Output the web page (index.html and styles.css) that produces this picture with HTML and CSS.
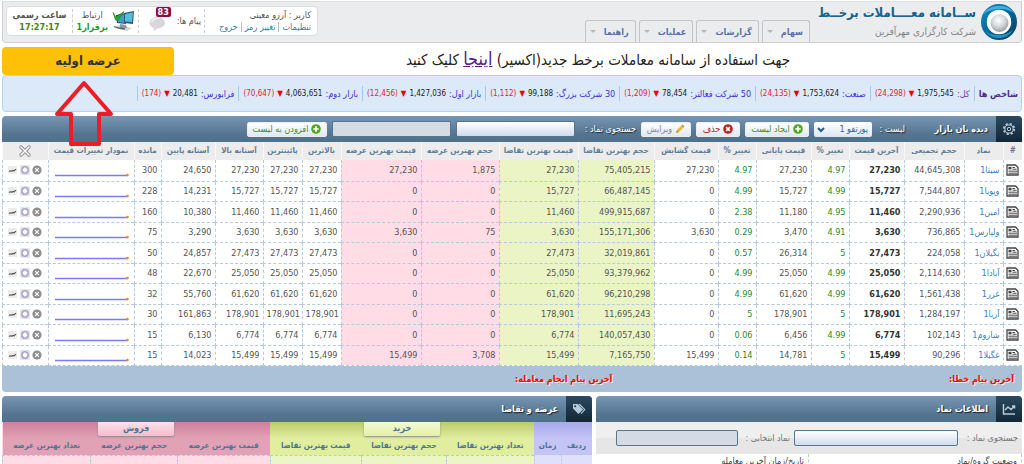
FILE: index.html
```html
<!DOCTYPE html>
<html lang="fa" dir="rtl">
<head>
<meta charset="utf-8">
<title>سامانه معاملات برخط</title>
<link rel="stylesheet" href="styles.css">
</head>
<body>
<svg class="defs" aria-hidden="true">
  <defs>
    <linearGradient id="ringFill" x1="0" y1="0" x2="1" y2="1"><stop offset="0" stop-color="#1187bd"/><stop offset=".5" stop-color="#04669a"/><stop offset="1" stop-color="#0b3f63"/></linearGradient>
    <radialGradient id="ballFill" cx=".45" cy=".35" r=".7"><stop offset="0" stop-color="#fff"/><stop offset=".5" stop-color="#d5d8db"/><stop offset="1" stop-color="#8d9499"/></radialGradient>
    <symbol id="doc" viewBox="0 0 13 12"><path d="M1 1h8.500l2.500 2.500V11H1z" fill="#fff" stroke="#444" stroke-width="1.300"/><rect x="2.500" y="2.800" width="3" height="2.600" fill="#444"/><path d="M6.500 3.500h2.500M6.500 5.200h4M2.500 7.200h8.500M2.500 9.200h8.500" stroke="#444"/></symbol>
    <symbol id="del" viewBox="0 0 10 10"><circle cx="5" cy="5" r="4.600" fill="#8e8e8e"/><path d="M3.200 3.200l3.600 3.600M6.800 3.200L3.200 6.800" stroke="#fff" stroke-width="1.100"/></symbol>
    <symbol id="add" viewBox="0 0 10 10"><rect width="10" height="10" rx="1" fill="#e4e3e8"/><circle cx="5" cy="5" r="3.900" fill="#a9a6cc"/><circle cx="5" cy="5" r="2.400" fill="#dddcee"/><path d="M5 2.800v4.400M2.800 5h4.400" stroke="#fff" stroke-width="1.500"/></symbol>
    <symbol id="mini" viewBox="0 0 10 10"><rect y="1" width="9" height="8" fill="#ececec"/><path d="M1 6c1 .6 1.600-.8 2.400 0s1.400-1.400 2.200-.4 1.400-1.300 2.600-1.300" fill="none" stroke="#555" stroke-width="1.100"/></symbol>
    <symbol id="spark" viewBox="0 0 76 6"><path d="M2 3.500h73" stroke="#7a7aff" stroke-width="1.500"/><circle cx="74.500" cy="3" r="1.300" fill="#ff8a00"/></symbol>
    <symbol id="plus" viewBox="0 0 10 10"><circle cx="5" cy="5" r="4.800" fill="#56a51d"/><path d="M5 2.300v5.400M2.300 5h5.400" stroke="#fff" stroke-width="1.700"/></symbol>
  </defs>
</svg>

<header class="top">
  <div class="brand">
    <svg class="logo" viewBox="0 0 38 38" aria-hidden="true">
      <circle cx="19" cy="19" r="15" fill="none" stroke="url(#ringFill)" stroke-width="6"/>
      <path d="M3.500 11C9 1 28-1 35 11c-6-6-22-7-31.500 0z" fill="#3db0dc"/>
      <path d="M5 28c5 8 21 11 28-1-7 6-20 7-28 1z" fill="#2490c0"/>
      <circle cx="19" cy="19" r="12.200" fill="#fff"/>
      <circle cx="19.500" cy="20" r="9" fill="url(#ballFill)"/>
    </svg>
    <div class="brand-text">
      <strong class="brand-name">ســامانه معــــاملات برخــط</strong>
      <span class="brand-sub">شرکت کارگزاری مهرآفرین</span>
    </div>
  </div>
  <nav class="tabs">
    <a class="tab" href="#">سهام</a>
    <a class="tab" href="#">گزارشات</a>
    <a class="tab" href="#">عملیات</a>
    <a class="tab" href="#">راهنما</a>
  </nav>
  <div class="status">
    <div class="user">
      <div>کاربر : آرزو معینی</div>
      <div class="user-links"><a href="#">تنظیمات</a><a href="#">تغییر رمز</a><a href="#">خروج</a></div>
    </div>
    <div class="messages">
      <span>پیام ها:</span>
      <span class="bubble">
        <svg viewBox="0 0 24 24" class="bubble-icon" aria-hidden="true"><path d="M9 9c5 0 8 3 8 6 0 4-5 5.500-8 5.500-1 1.500-2.500 2.200-4 2 1-.8 1.200-1.600.5-2.800C3 19 1.500 17.500 1.500 15c0-3.500 3.500-6 7.500-6z" fill="#dcd6da"/><path d="M3.500 14c1-3 5-4 8-3.500" stroke="#f6f3f5" stroke-width="1.500" fill="none"/></svg>
        <span class="badge">83</span>
      </span>
    </div>
    <div class="link-state">
      <svg viewBox="0 0 22 22" class="net-icon" aria-hidden="true">
        <path d="M2 18l5-3 13 3-5 3z" fill="#cfd4d8"/><path d="M8 14l6 1 1 3H8z" fill="#8b98a2"/>
        <path d="M4 5l10-2v11L5 13z" fill="#23506e"/><path d="M5 6l8-2v9l-7-1z" fill="#3ba0c8"/>
        <path d="M12 3l10-2-1 13-9-1z" fill="#2d5c78"/><path d="M13 4l8-1.500L20 12l-7-.5z" fill="#58bddb"/>
        <path d="M1 2.500L4 7l8-5.500L6 10.500 3.500 10z" fill="#2fa32c" stroke="#1a7d1f" stroke-width=".6"/>
        <path d="M2 16.500l5 1.500 6 1" stroke="#566" fill="none" stroke-width="1.300"/>
      </svg>
      <div class="pair"><span>ارتباط</span><strong class="online">برقرار1</strong></div>
    </div>
    <div class="pair clock"><strong>ساعت رسمی</strong><strong class="time">17:27:17</strong></div>
  </div>
</header>

<section class="notice">
  <p class="notice-text">جهت استفاده از سامانه معاملات برخط جدید(اکسیر) <a href="#">اینجا</a> کلیک کنید</p>
  <div class="offer-wrap">
    <button class="offer" type="button">عرضه اولیه</button>
    <svg class="arrow" viewBox="0 0 62 66" aria-hidden="true"><path d="M31 3L58 34H46V64H18V34H4z" fill="none" stroke="#ee1c24" stroke-width="4" stroke-linejoin="round"/></svg>
  </div>
</section>

<section class="indices">
  <strong class="indices-title">شاخص ها</strong>
  <div class="index"><span class="visited">کل:</span><bdi>1,975,545</bdi><i>▼</i><bdi class="down">(24,298)</bdi></div>
  <div class="index"><span>صنعت:</span><bdi>1,753,624</bdi><i>▼</i><bdi class="down">(24,135)</bdi></div>
  <div class="index"><span>50 شرکت فعالتر:</span><bdi>78,454</bdi><i>▼</i><bdi class="down">(1,209)</bdi></div>
  <div class="index"><span>30 شرکت بزرگ:</span><bdi>99,188</bdi><i>▼</i><bdi class="down">(1,112)</bdi></div>
  <div class="index"><span>بازار اول:</span><bdi>1,427,036</bdi><i>▼</i><bdi class="down">(12,456)</bdi></div>
  <div class="index"><span>بازار دوم:</span><bdi>4,063,651</bdi><i>▼</i><bdi class="down">(70,647)</bdi></div>
  <div class="index"><span>فرابورس:</span><bdi>20,481</bdi><i>▼</i><bdi class="down">(174)</bdi></div>
</section>

<section class="panel watch">
  <div class="bar">
    <span class="bar-icon"><svg viewBox="0 0 14 14" aria-hidden="true"><circle cx="7" cy="7" r="5.200" fill="none" stroke="#b5cbdc" stroke-width="1.800" stroke-dasharray="2.200 1.880"/><circle cx="7" cy="7" r="4.100" fill="none" stroke="#b5cbdc" stroke-width="1"/><circle cx="7" cy="7" r="1.700" fill="none" stroke="#b5cbdc" stroke-width="1"/></svg></span>
    <h2 class="bar-title watch-title">دیده بان بازار</h2>
    <label class="bar-label" for="list">لیست :</label>
    <select id="list" class="pick"><option>پورتفو 1</option></select>
    <button class="btn create" type="button"><svg aria-hidden="true"><use href="#plus"/></svg>ایجاد لیست</button>
    <button class="btn remove" type="button"><svg viewBox="0 0 10 10" aria-hidden="true"><circle cx="5" cy="5" r="4.800" fill="#b9271c"/><path d="M3.200 3.200l3.600 3.600M6.800 3.200L3.200 6.800" stroke="#fff" stroke-width="1.700"/></svg>حذف</button>
    <button class="btn edit" type="button"><svg viewBox="0 0 10 10" aria-hidden="true"><path d="M1 9l1-3 5-5 2 2-5 5z" fill="#f2b91d"/><path d="M1 9l1-3 2 2z" fill="#b98a55"/><path d="M7 1l2 2" stroke="#999" stroke-width="1.500"/></svg>ویرایش</button>
    <label class="bar-label find-label" for="find">جستجوی نماد :</label>
    <input id="find" class="field watch-field" type="text">
    <input class="field watch-field off" type="text" aria-label="نماد" disabled>
    <button class="btn append" type="button"><svg aria-hidden="true"><use href="#plus"/></svg>افزودن به لیست</button>
  </div>
  <table class="quotes">
    <colgroup><col class="w19"><col class="w39"><col class="w60"><col class="w55"><col class="w38"><col class="w55"><col class="w38"><col class="w64"><col class="w76"><col class="w79"><col class="w78"><col class="w80"><col class="w39"><col class="w39"><col class="w48"><col class="w54"><col class="w27"><col class="w86"><col class="w46"></colgroup>
    <thead><tr><th>#</th><th>نماد</th><th>حجم تجمیعی</th><th>آخرین قیمت</th><th>تغییر %</th><th>قیمت پایانی</th><th>تغییر %</th><th>قیمت گشایش</th><th>حجم بهترین تقاضا</th><th>قیمت بهترین تقاضا</th><th>حجم بهترین عرضه</th><th>قیمت بهترین عرضه</th><th>بالاترین</th><th>پائینترین</th><th>آستانه بالا</th><th>آستانه پایین</th><th>مانده</th><th>نمودار تغییرات قیمت</th><th><svg class="cross" viewBox="0 0 12 12" aria-hidden="true"><path d="M2 2l8 8M10 2l-8 8" stroke="#888" stroke-width="3.200" stroke-linecap="round"/><path d="M2 2l8 8M10 2l-8 8" stroke="#fff" stroke-width="1.600" stroke-linecap="round"/></svg></th></tr></thead>
    <tbody>
      <tr><td><svg class="doc"><use href="#doc"/></svg></td><td><a href="#">سیتا1</a></td><td>44,645,308</td><td class="last">27,230</td><td class="up">4.97</td><td>27,230</td><td class="up">4.97</td><td>27,230</td><td class="bid">75,405,215</td><td class="bid">27,230</td><td class="ask">1,875</td><td class="ask">27,230</td><td>27,230</td><td>27,230</td><td>27,230</td><td>24,650</td><td>300</td><td><svg class="spark"><use href="#spark"/></svg></td><td><div class="acts"><svg><use href="#del"/></svg><svg><use href="#add"/></svg><svg><use href="#mini"/></svg></div></td></tr>
      <tr><td><svg class="doc"><use href="#doc"/></svg></td><td><a href="#">وپویا1</a></td><td>7,544,807</td><td class="last">15,727</td><td class="up">4.99</td><td>15,727</td><td class="up">4.99</td><td>0</td><td class="bid">66,487,145</td><td class="bid">15,727</td><td class="ask">0</td><td class="ask">0</td><td>15,727</td><td>15,727</td><td>15,727</td><td>14,231</td><td>228</td><td><svg class="spark"><use href="#spark"/></svg></td><td><div class="acts"><svg><use href="#del"/></svg><svg><use href="#add"/></svg><svg><use href="#mini"/></svg></div></td></tr>
      <tr><td><svg class="doc"><use href="#doc"/></svg></td><td><a href="#">امین1</a></td><td>2,290,936</td><td class="last">11,460</td><td class="up">4.95</td><td>11,180</td><td class="up">2.38</td><td>0</td><td class="bid">499,915,687</td><td class="bid">11,460</td><td class="ask">0</td><td class="ask">0</td><td>11,460</td><td>11,460</td><td>11,460</td><td>10,380</td><td>160</td><td><svg class="spark"><use href="#spark"/></svg></td><td><div class="acts"><svg><use href="#del"/></svg><svg><use href="#add"/></svg><svg><use href="#mini"/></svg></div></td></tr>
      <tr><td><svg class="doc"><use href="#doc"/></svg></td><td><a href="#">ولپارس1</a></td><td>736,865</td><td class="last">3,630</td><td class="up">4.91</td><td>3,470</td><td class="up">0.29</td><td>3,630</td><td class="bid">155,171,306</td><td class="bid">3,630</td><td class="ask">75</td><td class="ask">3,630</td><td>3,630</td><td>3,630</td><td>3,630</td><td>3,290</td><td>75</td><td><svg class="spark"><use href="#spark"/></svg></td><td><div class="acts"><svg><use href="#del"/></svg><svg><use href="#add"/></svg><svg><use href="#mini"/></svg></div></td></tr>
      <tr><td><svg class="doc"><use href="#doc"/></svg></td><td><a href="#">بگیلان1</a></td><td>224,058</td><td class="last">27,473</td><td class="up">5</td><td>26,314</td><td class="up">0.57</td><td>0</td><td class="bid">32,019,861</td><td class="bid">27,473</td><td class="ask">0</td><td class="ask">0</td><td>27,473</td><td>27,473</td><td>27,473</td><td>24,857</td><td>50</td><td><svg class="spark"><use href="#spark"/></svg></td><td><div class="acts"><svg><use href="#del"/></svg><svg><use href="#add"/></svg><svg><use href="#mini"/></svg></div></td></tr>
      <tr><td><svg class="doc"><use href="#doc"/></svg></td><td><a href="#">آبادا1</a></td><td>2,114,630</td><td class="last">25,050</td><td class="up">4.99</td><td>25,050</td><td class="up">4.99</td><td>0</td><td class="bid">93,379,962</td><td class="bid">25,050</td><td class="ask">0</td><td class="ask">0</td><td>25,050</td><td>25,050</td><td>25,050</td><td>22,670</td><td>48</td><td><svg class="spark"><use href="#spark"/></svg></td><td><div class="acts"><svg><use href="#del"/></svg><svg><use href="#add"/></svg><svg><use href="#mini"/></svg></div></td></tr>
      <tr><td><svg class="doc"><use href="#doc"/></svg></td><td><a href="#">غزر1</a></td><td>1,561,438</td><td class="last">61,620</td><td class="up">4.99</td><td>61,620</td><td class="up">4.99</td><td>0</td><td class="bid">96,210,298</td><td class="bid">61,620</td><td class="ask">0</td><td class="ask">0</td><td>61,620</td><td>61,620</td><td>61,620</td><td>55,760</td><td>32</td><td><svg class="spark"><use href="#spark"/></svg></td><td><div class="acts"><svg><use href="#del"/></svg><svg><use href="#add"/></svg><svg><use href="#mini"/></svg></div></td></tr>
      <tr><td><svg class="doc"><use href="#doc"/></svg></td><td><a href="#">آریا1</a></td><td>1,284,197</td><td class="last">178,901</td><td class="up">5</td><td>178,901</td><td class="up">5</td><td>0</td><td class="bid">11,695,243</td><td class="bid">178,901</td><td class="ask">0</td><td class="ask">0</td><td>178,901</td><td>178,901</td><td>178,901</td><td>161,863</td><td>30</td><td><svg class="spark"><use href="#spark"/></svg></td><td><div class="acts"><svg><use href="#del"/></svg><svg><use href="#add"/></svg><svg><use href="#mini"/></svg></div></td></tr>
      <tr><td><svg class="doc"><use href="#doc"/></svg></td><td><a href="#">شاروم1</a></td><td>102,143</td><td class="last">6,774</td><td class="up">4.99</td><td>6,456</td><td class="up">0.06</td><td>0</td><td class="bid">140,057,430</td><td class="bid">6,774</td><td class="ask">0</td><td class="ask">0</td><td>6,774</td><td>6,774</td><td>6,774</td><td>6,130</td><td>15</td><td><svg class="spark"><use href="#spark"/></svg></td><td><div class="acts"><svg><use href="#del"/></svg><svg><use href="#add"/></svg><svg><use href="#mini"/></svg></div></td></tr>
      <tr><td><svg class="doc"><use href="#doc"/></svg></td><td><a href="#">غگیلا1</a></td><td>90,296</td><td class="last">15,499</td><td class="up">5</td><td>14,781</td><td class="up">0.14</td><td>15,499</td><td class="bid">7,165,750</td><td class="bid">15,499</td><td class="ask">3,708</td><td class="ask">15,499</td><td>15,499</td><td>15,499</td><td>15,499</td><td>14,023</td><td>15</td><td><svg class="spark"><use href="#spark"/></svg></td><td><div class="acts"><svg><use href="#del"/></svg><svg><use href="#add"/></svg><svg><use href="#mini"/></svg></div></td></tr>
    </tbody>
  </table>
  <div class="alerts"><span>آخرین پیام خطا:</span><span>آخرین پیام انجام معامله:</span></div>
</section>

<div class="lower">
  <section class="panel info">
    <div class="bar">
      <span class="bar-icon"><svg viewBox="0 0 14 14" aria-hidden="true"><path d="M1.500 2v10h11.500M3 8l3-3 3 2.500L12.500 4M10 4h2.500v2.500" fill="none" stroke="#b5cbdc" stroke-width="1.500"/></svg></span>
      <h2 class="bar-title">اطلاعات نماد</h2>
    </div>
    <div class="search">
      <label class="sym-label" for="sym">جستجوی نماد :</label><input id="sym" class="field sym-field" type="text">
      <label class="chosen-label" for="chosen">نماد انتخابی :</label><input id="chosen" class="field chosen-field off" type="text" disabled>
    </div>
    <div class="facts"><span>وضعیت گروه/نماد</span><span>تاریخ/زمان آخرین معامله</span></div>
  </section>
  <section class="panel depth">
    <div class="bar">
      <span class="bar-icon"><svg viewBox="0 0 14 14" aria-hidden="true"><path d="M6 2l2 0 5.500 5.500-4 4.500-.8-.8L12 7.500z" fill="#b5cbdc"/><path d="M1 2h4.500L11 7.500 6.500 12 1 6.500z" fill="#b5cbdc"/><circle cx="3.200" cy="4.200" r="1" fill="#1a3446"/></svg></span>
      <h2 class="bar-title">عرضه و تقاضا</h2>
    </div>
    <div class="sides">
      <table class="side meta"><thead><tr><th class="w31">ردیف</th><th>زمان</th></tr></thead><tbody><tr><td></td><td></td></tr></tbody></table>
      <table class="side buy"><caption>خرید</caption><thead><tr><th>تعداد بهترین تقاضا</th><th>حجم بهترین تقاضا</th><th>قیمت بهترین تقاضا</th></tr></thead><tbody><tr><td></td><td></td><td></td></tr></tbody></table>
      <table class="side sell"><caption>فروش</caption><thead><tr><th>قیمت بهترین عرضه</th><th>حجم بهترین عرضه</th><th>تعداد بهترین عرضه</th></tr></thead><tbody><tr><td></td><td></td><td></td></tr></tbody></table>
    </div>
  </section>
</div>
</body>
</html>
```
FILE: styles.css
```css
* { box-sizing: border-box; }
html, body { height: 100%; }
body {
  margin: 0;
  padding: 0 2px;
  overflow: hidden;
  background: #fff;
  color: #555;
  font: 9px/12px "DejaVu Sans Condensed", "DejaVu Sans", "Noto Sans", sans-serif;
}
a { text-decoration: none; color: #3a7ca5; }
h2, p { margin: 0; }
button, input, select { font: inherit; margin: 0; }
svg { flex: none; }
.defs { position: absolute; width: 0; height: 0; }

.top {
  display: flex;
  align-items: flex-end;
  height: 42px;
  margin-top: 1px;
  background: #ebecee;
  border: 1px solid #cfcfd1;
  border-top-color: #dedee0;
  border-radius: 0 0 4px 4px;
}
.brand { display: flex; align-items: center; align-self: stretch; gap: 4px; padding-right: 3px; }
.logo { width: 38px; height: 38px; }
.brand-text { display: flex; flex-direction: column; gap: 2px; width: 163px; }
.brand-name { color: #17628f; font-size: 13px; line-height: 18px; white-space: nowrap; }
.brand-sub { color: #858585; font-size: 10px; line-height: 16px; }
.tabs { display: flex; gap: 3px; padding-right: 3px; }
.tab {
  display: flex;
  align-items: center;
  gap: 8px;
  height: 22px;
  padding: 0 6px 0 4px;
  border: 1px solid #c4c4c6;
  border-bottom: 0;
  border-radius: 3px 3px 0 0;
  color: #5672b0;
  font-weight: bold;
}
.tab::after { content: ""; border: 3px solid transparent; border-top-color: #b5b5b5; border-bottom: 0; }
.status {
  display: flex;
  align-self: flex-start;
  align-items: center;
  height: 30px;
  margin: 4px auto 0 3px;
  background: #fff;
  border: 1px solid #dcdcde;
  border-radius: 4px;
}
.status > div { display: flex; align-items: center; height: 24px; padding: 0 6px; white-space: nowrap; }
.status > div + div { border-right: 1px dashed #ccc; }
.status > .user { flex-direction: column; align-items: flex-start; width: 112px; }
.user-links { display: flex; align-items: center; }
.user-links a + a { margin-right: 3px; padding-right: 3px; border-right: 1px solid #bbb; line-height: 10px; }
.status > .messages { gap: 5px; width: 66px; padding: 0 3px; }
.bubble { position: relative; width: 24px; height: 26px; }
.bubble-icon { width: 24px; height: 24px; display: block; }
.badge {
  position: absolute;
  top: -1px;
  right: 1px;
  padding: 0 2px;
  background: #8e0a43;
  border-radius: 2px;
  color: #fff;
  font-weight: bold;
  line-height: 10px;
}
.link-state { gap: 4px; width: 66px; }
.net-icon { width: 22px; height: 22px; }
.status > .link-state { flex-direction: row-reverse; justify-content: flex-end; padding: 0 4px; }
.link-state .net-icon { order: 1; }
.pair { display: flex; flex-direction: column; align-items: center; }
.online { color: #1a9a1a; }
.status > .clock { flex-direction: column; width: 66px; }
.time { color: #4d8500; }

.notice { display: flex; align-items: center; height: 32px; }
.notice-text { flex: 1; text-align: center; color: #222; font-size: 15px; line-height: 24px; }
.notice-text a { color: #551a8b; text-decoration: underline; font-size: 18px; }
.offer-wrap { position: relative; display: flex; }
.offer {
  width: 172px;
  height: 28px;
  margin-top: 3px;
  padding: 0;
  background: #ffc107;
  border: 0;
  border-radius: 4px;
  color: #333;
  font-size: 13px;
  font-weight: bold;
}
.arrow { position: absolute; left: 51px; top: 36px; width: 62px; height: 66px; z-index: 2; }

.indices {
  display: flex;
  align-items: center;
  height: 37px;
  margin-bottom: 4px;
  padding: 0 3px;
  background: #dbe9f8;
  border: 1px solid #b0d3f0;
  border-radius: 4px;
  white-space: nowrap;
}
.indices-title { color: #4b2a86; margin-left: 4px; }
.index { display: flex; align-items: center; gap: 3px; height: 15px; padding: 0 4px; border-right: 1px solid #9ecbee; color: #222; }
.index:last-child { border-left: 1px solid #9ecbee; }
.index bdi { font-size: 8px; }
.index span { color: #3b2fd8; }
.index .visited { color: #6a3aa8; }
.index i { color: #e00; font-style: normal; font-size: 8px; }
.index .down { color: #e8202c; }

.bar {
  display: flex;
  align-items: center;
  gap: 5px;
  height: 26px;
  background: linear-gradient(#7896b5, #54758f 70%, #4f7189);
  border-radius: 4px 4px 0 0;
  overflow: hidden;
}
.bar-icon { display: flex; align-items: center; justify-content: center; width: 26px; height: 26px; background: linear-gradient(#2b4a60, #122735); }
.bar-icon svg { width: 14px; height: 14px; }
.bar-title { margin-right: 3px; color: #fff; font-size: 9px; line-height: 12px; text-shadow: 1px 1px 1px #222; white-space: nowrap; }
.watch-title { width: 78px; }
.bar-label { min-width: 28px; color: #fff; text-shadow: 1px 1px 1px #222; white-space: nowrap; }
.find-label { min-width: 56px; }
.pick {
  appearance: none;
  width: 58px;
  height: 15px;
  padding: 0 4px;
  border: 0;
  border-radius: 2px;
  color: #33658a;
  background: url("data:image/svg+xml,%3Csvg xmlns='http://www.w3.org/2000/svg' viewBox='0 0 8 6'%3E%3Cpath d='M1 1l3 3 3-3' fill='none' stroke='%23205a8c' stroke-width='2'/%3E%3C/svg%3E") 3px 5px / 8px 6px no-repeat, linear-gradient(#fff, #dbe6f4);
}
.btn {
  display: flex;
  align-items: center;
  justify-content: center;
  gap: 3px;
  height: 15px;
  padding: 0 4px;
  border: 1px solid #e8eef4;
  border-radius: 2px;
  background: linear-gradient(#fff, #dfe8f3);
  white-space: nowrap;
}
.btn svg { width: 10px; height: 10px; }
.create { width: 64px; color: #4a8a2a; }
.remove { width: 44px; color: #b02a20; }
.edit { width: 50px; color: #888; }
.append { width: 80px; color: #4a8a2a; }
.field { height: 16px; padding: 0 4px; border: 1px solid #56768f; border-radius: 2px; background: linear-gradient(#fff, #cfdced); }
.watch-field { width: 119px; }
.field.off { background: #d5dbe2; }

.quotes { width: 100%; table-layout: fixed; border-collapse: collapse; }
.quotes th { height: 18px; padding: 0; background: #ececec; color: #5b7d98; border-left: 1px solid #f8f8f8; font-size: 8px; white-space: nowrap; text-align: center; }
.quotes td { height: 21px; padding: 0 3px; border-left: 1px dashed #b4cbdd; border-bottom: 1px dashed #b4cbdd; text-align: right; direction: ltr; white-space: nowrap; }
.quotes tr:nth-child(even) td { height: 20px; }
.quotes td:nth-child(2) { direction: rtl; }
.quotes td:first-child, .quotes td:last-child { padding: 0; text-align: center; }
.quotes a { color: #3e7fc1; }
.quotes .last { color: #333; font-weight: bold; }
.quotes .up { color: #2a8a2a; }
.quotes .bid { background: #eaf4c4; }
.quotes .ask { background: #ffdce6; }
.quotes svg { display: block; }
.quotes .doc { width: 13px; height: 12px; margin: 0 auto; }
.quotes .cross { width: 12px; height: 12px; margin: 0 auto; }
.quotes .spark { width: 76px; height: 6px; margin: 10px auto 0; }
.acts { display: flex; flex-direction: row-reverse; justify-content: center; gap: 2px; }
.acts svg { width: 10px; height: 10px; }
.w19 { width: 19px; } .w27 { width: 27px; } .w31 { width: 31px; } .w38 { width: 38px; } .w39 { width: 39px; }
.w46 { width: 46px; } .w48 { width: 48px; } .w54 { width: 54px; } .w55 { width: 55px; } .w60 { width: 60px; }
.w64 { width: 64px; } .w76 { width: 76px; } .w78 { width: 78px; } .w79 { width: 79px; } .w80 { width: 80px; } .w86 { width: 86px; }
.alerts { display: flex; align-items: center; height: 26px; padding: 0 8px; background: #abc1d7; border-radius: 0 0 4px 4px; color: #f00; font-weight: bold; text-shadow: 1px 1px 0 #eee; }
.alerts span { width: 40%; }

.lower { display: flex; gap: 4px; margin-top: 4px; }
.info { flex: 426; }
.depth { flex: 590; }
.search { display: flex; align-items: center; gap: 4px; height: 32px; padding: 0 4px; background: linear-gradient(#efefef 50%, #e6e6e6 50%); color: #777; white-space: nowrap; }
.sym-label { min-width: 56px; }
.chosen-label { min-width: 48px; }
.sym-field { width: 164px; }
.chosen-field { width: 122px; }
.facts { display: flex; color: #444; line-height: 14px; }
.facts span { flex: 1; padding: 0 4px; border-right: 1px dashed #b4cbdd; }
.sides { display: flex; }
.side { position: relative; table-layout: fixed; border-collapse: collapse; height: 44px; }
.side caption { position: absolute; top: 0; left: 50%; width: 76px; height: 14px; margin-left: -38px; border-radius: 0 0 2px 2px; box-shadow: 0 1px 2px #888; color: #4e7390; font-weight: bold; }
.side th { height: 33px; padding: 16px 0 0; color: #4e7390; font-size: 8px; text-align: center; white-space: nowrap; }
.side td { height: 11px; border-left: 1px dashed #b4cbdd; border-top: 1px dashed #b4cbdd; }
.meta { flex: 58; background: #e0e0fc; }
.meta thead { background: linear-gradient(#a8a8ec, #c4c4f6 50%, #c4c4f6); }
.buy { flex: 264; background: #ecf5c5; }
.buy thead { background: linear-gradient(#bccb6e, #e0ee9e 50%, #e0ee9e); }
.buy caption { background: linear-gradient(#f3f9d4, #e4f1a4); }
.sell { flex: 268; background: #ffdce6; }
.sell thead { background: linear-gradient(#cc8099, #e2a2b6 50%, #e2a2b6); }
.sell caption { background: linear-gradient(#fde2ea, #f3bccb); }
```
